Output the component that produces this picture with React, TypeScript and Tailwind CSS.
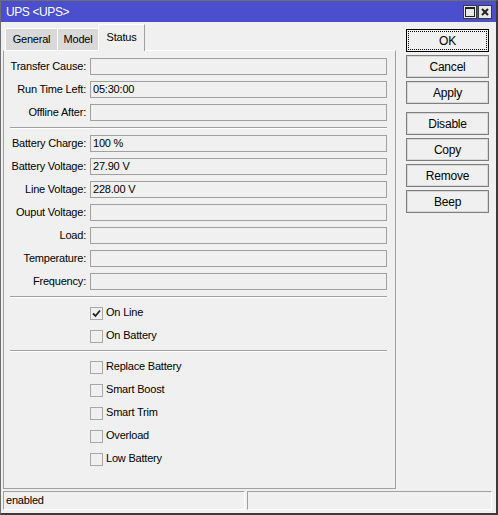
import React from 'react'

const font = { fontFamily: '"Liberation Sans", Arial, sans-serif' }

const groups: { label: string; value?: string }[][] = [
  [
    { label: 'Transfer Cause:' },
    { label: 'Run Time Left:', value: '05:30:00' },
    { label: 'Offline After:' },
  ],
  [
    { label: 'Battery Charge:', value: '100 %' },
    { label: 'Battery Voltage:', value: '27.90 V' },
    { label: 'Line Voltage:', value: '228.00 V' },
    { label: 'Ouput Voltage:' },
    { label: 'Load:' },
    { label: 'Temperature:' },
    { label: 'Frequency:' },
  ],
]

const flags: { label: string; on?: boolean }[][] = [
  [{ label: 'On Line', on: true }, { label: 'On Battery' }],
  [
    { label: 'Replace Battery' },
    { label: 'Smart Boost' },
    { label: 'Smart Trim' },
    { label: 'Overload' },
    { label: 'Low Battery' },
  ],
]

function Separator() {
  return <div className="ml-[6px] w-[377px] h-[2px] border-t border-[#a0a0a0] border-b border-b-white" />
}

function Field({ label, value }: { label: string; value?: string }) {
  return (
    <div className="flex items-center h-[17px]">
      <div className="w-[83px] text-right pr-[1px] whitespace-nowrap">{label}</div>
      <div className="ml-[3px] w-[297px] h-[17px] border border-[#a0a0a0] pl-[2px] flex items-center">
        {value}
      </div>
    </div>
  )
}

function Check({ label, on }: { label: string; on?: boolean }) {
  return (
    <div className="flex items-center h-[17px]">
      <div className="ml-[86px] mt-[1px] w-[13px] h-[13px] border border-[#a8a8a8] bg-[#f0f0f0] flex items-center justify-center">
        {on && (
          <svg width="9" height="9" viewBox="0 0 9 9">
            <path d="M1 4.5 L3.5 7 L8 1.5" stroke="#222" strokeWidth="1.8" fill="none" />
          </svg>
        )}
      </div>
      <span className="ml-[3px] whitespace-nowrap">{label}</span>
    </div>
  )
}

function Button({ label, focused }: { label: string; focused?: boolean }) {
  if (focused) {
    return (
      <div className="w-[83px] h-[23px] border border-black bg-[#f0f0f0] p-[1px]">
        <div className="w-full h-full border border-dotted border-black flex items-center justify-center">
          {label}
        </div>
      </div>
    )
  }
  return (
    <div className="w-[83px] h-[23px] border border-[#7e7e7e] bg-[#f0f0f0] shadow-[inset_0_0_0_1px_#d8d8d8] flex items-center justify-center">
      {label}
    </div>
  )
}

export default function App() {
  return (
    <div
      style={font}
      className="w-[498px] h-[515px] bg-[#f0f0f0] text-[11px] tracking-[-0.2px] text-black flex flex-col border-l border-t border-[#6e6e6e] border-r-2 border-b-2 border-r-[#3a3a3a] border-b-[#3a3a3a] overflow-hidden"
    >
      {/* title bar */}
      <div className="h-[21px] bg-[#4b4fcd] flex items-center pl-[5px] pr-[4px] text-white text-[12px]">
        <span className="flex-1 tracking-[-0.4px]">UPS &lt;UPS&gt;</span>
        <div className="flex gap-[1px]">
          <div className="w-[14px] h-[14px] bg-[#e8e8e8] border border-[#3a3a3a] flex items-center justify-center">
            <svg width="10" height="10" viewBox="0 0 10 10">
              <rect x="0.5" y="0.5" width="9" height="9" fill="none" stroke="#222" />
              <line x1="0" y1="1.5" x2="10" y2="1.5" stroke="#222" />
            </svg>
          </div>
          <div className="w-[14px] h-[14px] bg-[#e8e8e8] border border-[#3a3a3a] flex items-center justify-center">
            <svg width="8" height="8" viewBox="0 0 8 8">
              <path d="M1 1 L7 7 M7 1 L1 7" stroke="#222" strokeWidth="2" />
            </svg>
          </div>
        </div>
      </div>

      {/* body */}
      <div className="flex">
        <div className="ml-[2px] w-[393px] flex flex-col">
          <div className="h-[28px] flex items-end pl-[2px]">
            <div className="w-[52px] h-[22px] bg-[#d9d9d9] border-l border-t border-white flex items-center justify-center">
              General
            </div>
            <div className="w-[41px] h-[22px] bg-[#d9d9d9] border-l border-t border-white flex items-center justify-center">
              Model
            </div>
            <div className="w-[47px] h-[27px] -mb-px relative z-10 bg-[#f0f0f0] border-l border-t border-white border-r border-r-[#a0a0a0] flex items-start justify-center pt-[4px]">
              Status
            </div>
          </div>
          <div className="h-[439px] border border-t-white border-[#a0a0a0] pt-[7px] flex flex-col gap-[6px]">
            {groups.map((g, gi) => (
              <React.Fragment key={gi}>
                {gi > 0 && <Separator />}
                {g.map((f) => (
                  <Field key={f.label} {...f} />
                ))}
              </React.Fragment>
            ))}
            {flags.map((g, gi) => (
              <React.Fragment key={'f' + gi}>
                <Separator />
                {g.map((f) => (
                  <Check key={f.label} {...f} />
                ))}
              </React.Fragment>
            ))}
          </div>
        </div>

        <div className="ml-[10px] mt-[7px] flex flex-col gap-[3px] text-[12px]">
          <Button label="OK" focused />
          <Button label="Cancel" />
          <Button label="Apply" />
          <div className="h-[5px] -mb-[3px]" />
          <Button label="Disable" />
          <Button label="Copy" />
          <Button label="Remove" />
          <Button label="Beep" />
        </div>
      </div>

      {/* status bar */}
      <div className="mt-[2px] ml-[2px] flex gap-[2px]">
        <div className="w-[242px] h-[19px] border-t border-l border-[#a0a0a0] border-b border-r border-b-white border-r-white pl-[2px] flex items-center">
          enabled
        </div>
        <div className="w-[245px] h-[19px] border-t border-l border-[#a0a0a0] border-b border-r border-b-white border-r-white" />
      </div>
    </div>
  )
}
